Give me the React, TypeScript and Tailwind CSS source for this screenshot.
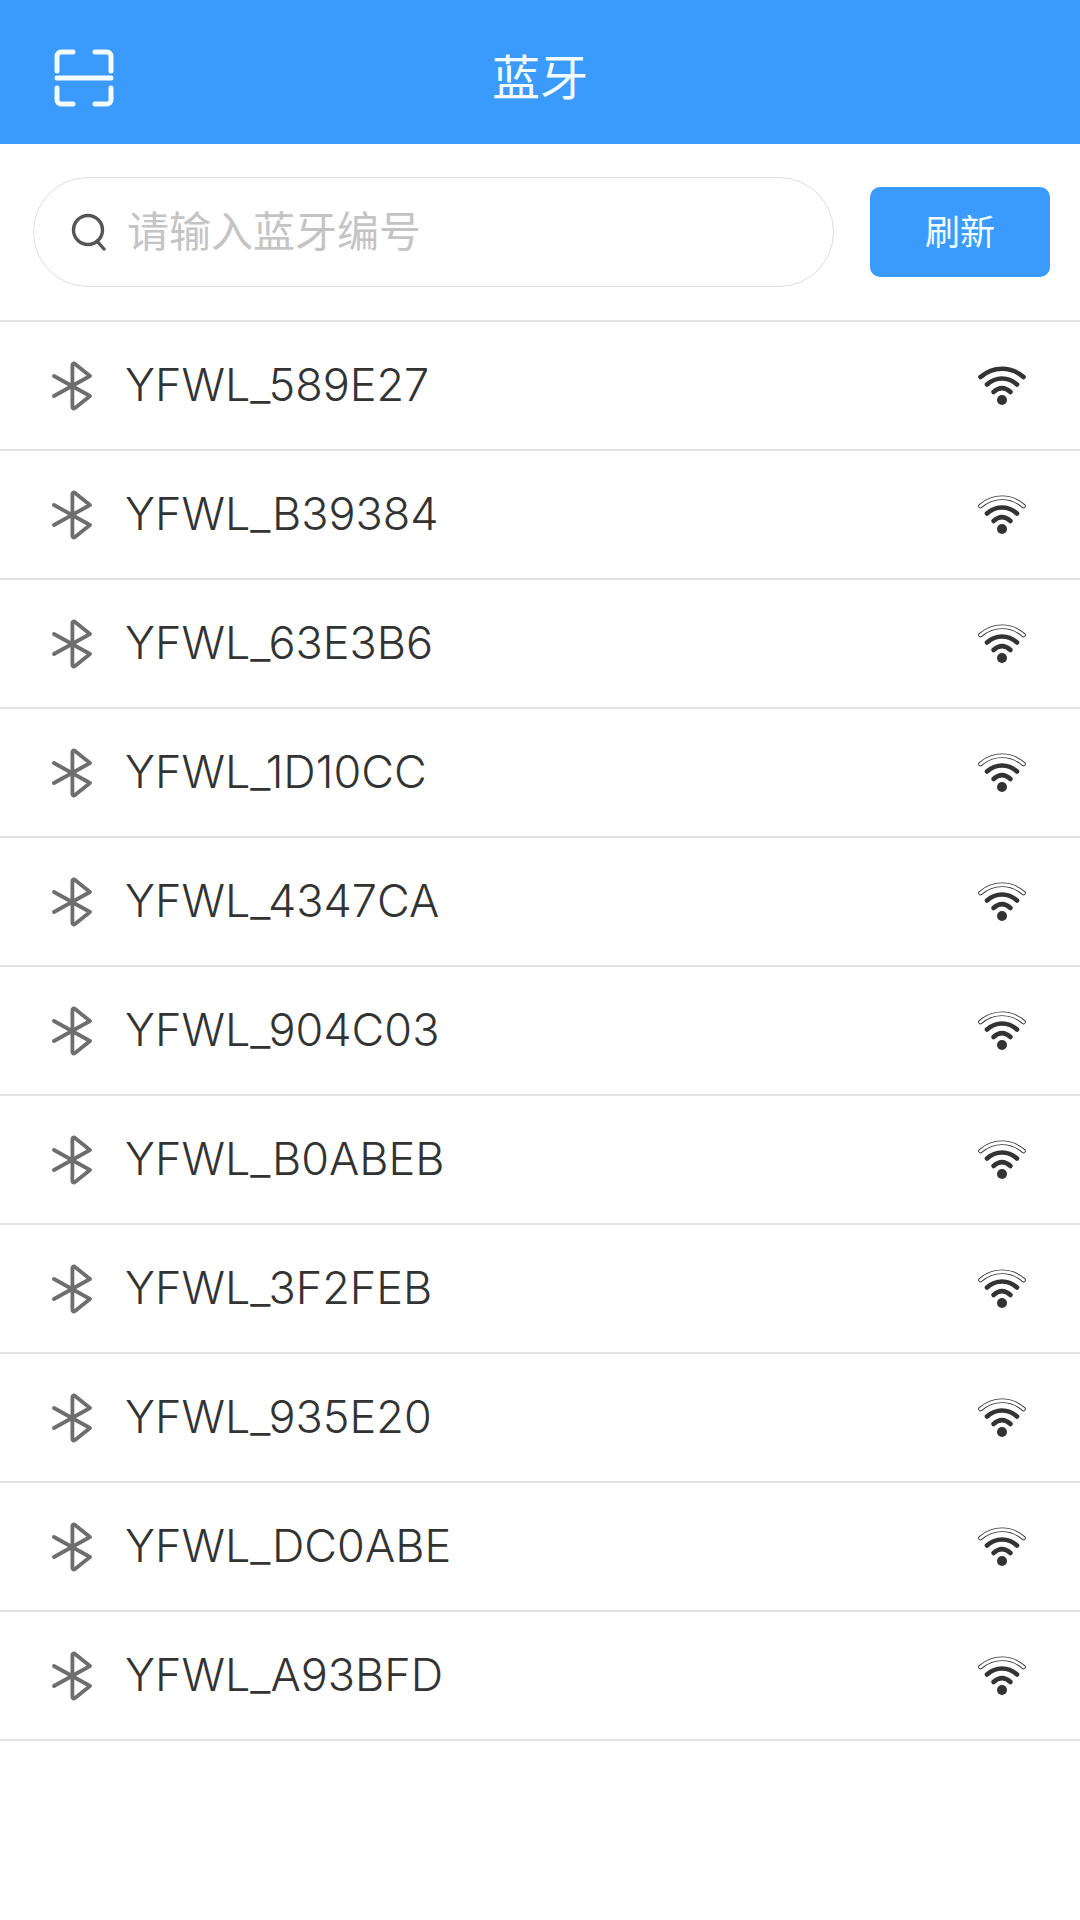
import React from 'react';

const devices = [
  { name: 'YFWL_589E27', full: true },
  { name: 'YFWL_B39384', full: false },
  { name: 'YFWL_63E3B6', full: false },
  { name: 'YFWL_1D10CC', full: false },
  { name: 'YFWL_4347CA', full: false },
  { name: 'YFWL_904C03', full: false },
  { name: 'YFWL_B0ABEB', full: false },
  { name: 'YFWL_3F2FEB', full: false },
  { name: 'YFWL_935E20', full: false },
  { name: 'YFWL_DC0ABE', full: false },
  { name: 'YFWL_A93BFD', full: false },
];

function ScanIcon() {
  return (
    <svg className="w-[60px] h-[60px]" viewBox="0 0 60 60" fill="none" stroke="#f2fbff" strokeWidth="5" strokeLinecap="round" strokeLinejoin="round">
      <path d="M19 3H7a4 4 0 0 0-4 4v15" />
      <path d="M41 3h12a4 4 0 0 1 4 4v15" />
      <path d="M3 29h54" />
      <path d="M3 39v12a4 4 0 0 0 4 4h12" />
      <path d="M57 39v12a4 4 0 0 1-4 4H41" />
    </svg>
  );
}

function SearchIcon() {
  return (
    <svg className="w-[36px] h-[38px]" viewBox="0 0 36 38" fill="none" stroke="#555555" strokeWidth="3.4" strokeLinecap="round">
      <circle cx="17" cy="17" r="14.5" />
      <path d="M26 28l7 8" />
    </svg>
  );
}

function BluetoothIcon() {
  return (
    <svg className="w-[42px] h-[50px]" viewBox="0 0 42 50" fill="none" stroke="#6e6e6e" strokeWidth="3.8" strokeLinecap="round" strokeLinejoin="round">
      <path d="M3 15l36 20-15 12a1.5 1.5 0 0 1-2.6-1V4a1.5 1.5 0 0 1 2.6-1l15 12L3 35" />
    </svg>
  );
}

function WifiIcon({ full }: { full: boolean }) {
  return (
    <svg className="w-[48px] h-[40px]" viewBox="0 0 48 40" fill="none" strokeLinecap="round">
      <path d="M2.5 11C15 0 33 0 45.5 11" stroke="#333333" strokeWidth="4.6" />
      {!full && <path d="M2.5 11C15 0 33 0 45.5 11" stroke="#ffffff" strokeWidth="2.8" />}
      <path d="M9 18.5C18 10.5 30 10.5 39 18.5" stroke="#333333" strokeWidth="4.6" />
      <path d="M15.5 26C21 21 27 21 32.5 26" stroke="#333333" strokeWidth="4.6" />
      <circle cx="24" cy="34" r="5" fill="#333333" />
    </svg>
  );
}

export default function App() {
  return (
    <div className="w-[1080px] h-[1920px] bg-white font-['Inter','Noto_Sans_CJK_SC',sans-serif]">
      {/* Header */}
      <div className="relative h-[144px] bg-[#3b9bfd] flex items-center justify-center">
        <div className="absolute left-[54px] top-[49px] flex">
          <ScanIcon />
        </div>
        <h1 className="text-[#f2fbff] text-[48px] font-normal leading-none pt-[12px]">蓝牙</h1>
      </div>

      {/* Search */}
      <div className="h-[178px] flex items-center pl-[33px] pr-[30px] gap-[36px] border-b-2 border-[#e2e2e2]">
        <div className="w-[801px] h-[110px] rounded-full border border-[#dddddd] flex items-center pl-[37px] gap-[20px]">
          <SearchIcon />
          <span className="text-[#c4c4c4] text-[42px] leading-none">请输入蓝牙编号</span>
        </div>
        <button className="w-[180px] h-[90px] rounded-[10px] bg-[#3b9bfd] text-[#f2fbff] text-[35px]">刷新</button>
      </div>

      {/* Device list */}
      {devices.map((d) => (
        <div key={d.name} className="h-[129px] flex items-center pl-[51px] pr-[54px] border-b-2 border-[#e2e2e2]">
          <BluetoothIcon />
          <span className="ml-[32px] mb-[2px] flex-1 text-[#333333] text-[45px] font-light leading-none">{d.name}</span>
          <WifiIcon full={d.full} />
        </div>
      ))}
    </div>
  );
}
